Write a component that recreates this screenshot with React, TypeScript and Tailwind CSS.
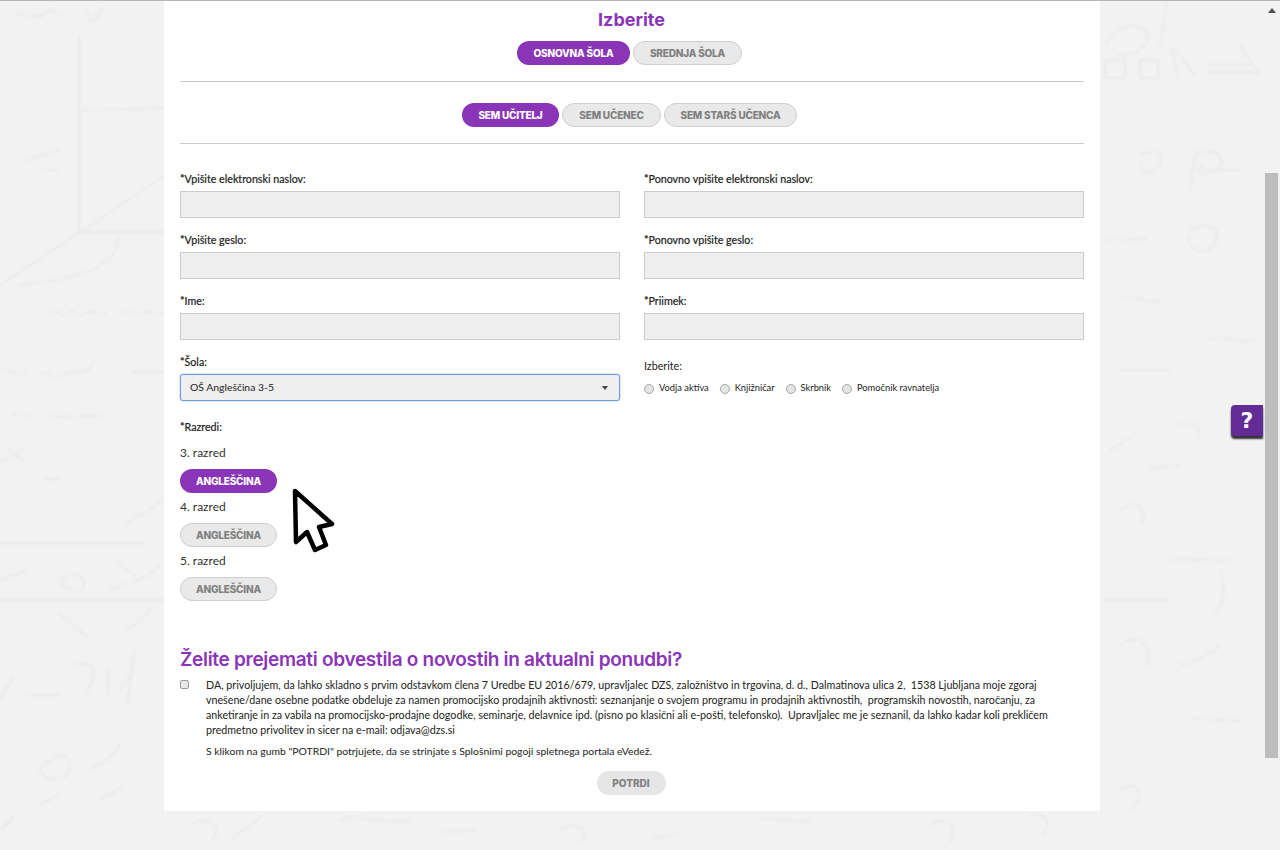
import React from "react";

const sans = "font-['Lato','Open_Sans',sans-serif]";
const display = "font-['Inter','Lato',sans-serif]";

function Pill({ label, active, w }: { label: string; active?: boolean; w: string }) {
  return (
    <button
      className={`${w} h-6 rounded-full text-[10px] font-extrabold tracking-[-0.2px] ${display} ${
        active ? "bg-[#8a35b8] text-white" : "bg-[#e9e9e9] border border-[#cfcfcf] text-[#7f7f7f]"
      }`}
    >
      {label}
    </button>
  );
}

function Field({ label }: { label: string }) {
  return (
    <div className="flex flex-col">
      <label className="h-[15px] leading-[14px] text-[10.7px] text-[#222] [-webkit-text-stroke:0.2px] mb-[4px]">{label}</label>
      <input className="h-[27px] bg-[#efefef] border border-[#cccccc] block w-full" />
    </div>
  );
}

function Grade({ n, active }: { n: string; active?: boolean }) {
  return (
    <div className="flex flex-col items-start">
      <div className="h-[16px] leading-[16px] text-[12px] text-[#333] mb-[8px]">{n}. razred</div>
      <Pill label="ANGLEŠČINA" active={active} w="w-[97px]" />
    </div>
  );
}

function Radio({ label }: { label: string }) {
  return (
    <span className="flex items-center">
      <span className="w-[10px] h-[10px] rounded-full bg-[#e4e4e4] border border-[#a9a9a9] mr-[5px] mt-[2px]" />
      <span className="text-[9.3px] text-[#222]">{label}</span>
    </span>
  );
}

export default function App() {
  return (
    <div className={`relative h-[850px] w-[1280px] overflow-hidden bg-[#f2f2f2] ${sans}`}>
      <svg className="absolute inset-0 blur-[1px]" width="1280" height="850" fill="none" stroke="#eaeaea" strokeWidth="2">
        <path d="M15 15c10-6 20 8 30-2s10 8 20 0M85 10l8 12 10-14M79 35V233M80 110l84-2M0 285l79-52 85-57M118 235c2 25-20 42-100 50M80 232h84M25 160l35-10M42 170h16" />
        <path d="M50 313c8-6 10 6 18 0s10 6 18 0 10 6 20 0M125 313c8-6 10 6 18 0s10 6 20 0M0 372c8-8 16 8 26 0M40 375c8-8 14 8 24 0s16 6 30-12M132 372h32M12 416c8-8 14 6 20 0M50 417c12-6 20 6 30 0s14 4 22-2" />
        <path d="M0 462l25-14M8 448l16 14M45 479h16M125 525c15-14 25-10 39-28M0 543h145M0 582c10-8 20-6 26-12M60 582c6-10 20-10 24 0s-16 12-24 0M115 560l20 16M110 590c12-4 30-8 50-24M0 600h164M58 612l30 26M125 630c10-4 22-14 26-24" />
        <path d="M0 700c4-10 10-16 14-24M26 695h34M75 665c20-5 25 5 10 30M108 695v-28M118 690c6-6 10-8 14-20M135 650l-8 55M40 770c12-16 30-20 30-4s-25 18-30 4M90 770c10-6 28-18 30-26M100 800c10-6 18-10 24-14M40 805c10-6 18-8 20-14M0 830c6-4 10-10 14-14" />
        <path d="M1105 45c10-18 30-26 40-14s-8 26-30 24M1166 5l-6 40M1172 48l6 30M1105 60h20v18h-20zM1140 60h18v18h-18zM1175 48l20 28M1208 65h46M1208 72h50M1240 45l20 30M1140 155c20-8 25 2 18 12s-25 6-14-6M1198 155c18-10 30 5 20 14s-25 6-16-4M1190 190l6-40M1205 170h35" />
        <path d="M1106 240c14-6 26 4 40-2M1190 230c20-10 34 0 24 14s-30 6-24-10M1120 300c14-8 26 6 40 0M1210 340c14-6 28 4 44 0M1180 425c14-8 24 4 16 14M1120 370h50M1110 450l24-14M1150 470c12-6 20 0 30-6" />
        <path d="M1120 510c14-12 26-2 22 14M1170 560c18-5 40 5 60 0M1220 570c5 20 5 30-5 45M1120 645c18-14 36 2 26 22M1190 720c14-6 30 4 50 0M1120 790c16-12 26 4 12 20M1106 600h64M1180 665c14-4 30-10 40-20" />
        <path d="M190 825c16-12 34 2 22 16M232 838c10-8 20-12 30-22M340 820c14-6 40 4 70 0M560 830c14-12 34 2 18 14M760 820c14-4 30 4 50 0M930 825c18-12 30 4 18 18M1030 815c14-4 24 8 12 20M440 835c14-8 24-2 36-6M650 840c10-6 20-2 30-8" />
      </svg>

      <div className="relative ml-[164px] w-[936px] h-[811px] bg-white px-4 text-[#222]">
        <h2 className={`h-[41px] pt-[9px] pr-[1px] leading-[22px] text-center text-[18px] font-bold text-[#8a35b8] ${display}`}>Izberite</h2>
        <div className="flex justify-center gap-[3px] pr-[5px]">
          <Pill label="OSNOVNA ŠOLA" active w="w-[113px]" />
          <Pill label="SREDNJA ŠOLA" w="w-[109px]" />
        </div>
        <hr className="mt-4 border-0 border-t border-[#cccccc]" />
        <div className="flex justify-center gap-[3px] pr-[5px] mt-[21px]">
          <Pill label="SEM UČITELJ" active w="w-[97px]" />
          <Pill label="SEM UČENEC" w="w-[99px]" />
          <Pill label="SEM STARŠ UČENCA" w="w-[133px]" />
        </div>
        <hr className="mt-4 border-0 border-t border-[#cccccc]" />

        <div className="grid grid-cols-2 gap-x-6 gap-y-[15px] mt-[28px]">
          <Field label="*Vpišite elektronski naslov:" />
          <Field label="*Ponovno vpišite elektronski naslov:" />
          <Field label="*Vpišite geslo:" />
          <Field label="*Ponovno vpišite geslo:" />
          <Field label="*Ime:" />
          <Field label="*Priimek:" />
          <div className="flex flex-col">
            <label className="h-[15px] leading-[14px] text-[10.7px] [-webkit-text-stroke:0.2px] mb-[4px]">*Šola:</label>
            <div className="h-[27px] bg-[#efefef] border border-[#6f9be0] rounded-[3px] shadow-[0_0_2px_#8fb4ea] flex items-center justify-between pl-[9px] pr-[11px]">
              <span className="text-[10.4px]">OŠ Angleščina 3-5</span>
              <span className="w-0 h-0 border-x-[3.5px] border-x-transparent border-t-[4px] border-t-[#444]" />
            </div>
          </div>
          <div className="flex flex-col pt-[3px]">
            <div className="h-[15px] leading-[15px] text-[10.7px]">Izberite:</div>
            <div className="flex items-center gap-[11px] mt-[7px] h-[15px]">
              <Radio label="Vodja aktiva" />
              <Radio label="Knjižničar" />
              <Radio label="Skrbnik" />
              <Radio label="Pomočnik ravnatelja" />
            </div>
          </div>
        </div>

        <div className="h-[15px] leading-[14px] text-[10.7px] [-webkit-text-stroke:0.2px] mt-[19px]">*Razredi:</div>
        <div className="flex flex-col gap-[6px] mt-[10px]">
          <Grade n="3" active />
          <Grade n="4" />
          <Grade n="5" />
        </div>

        <h3 className={`mt-[46px] h-[26px] leading-[26px] text-[19px] font-semibold tracking-[-0.3px] text-[#8a35b8] ${display}`}>
          Želite prejemati obvestila o novostih in aktualni ponudbi?
        </h3>
        <div className="flex mt-[4px]">
          <input type="checkbox" className="appearance-none w-[9px] h-[9px] mt-[3px] mr-[17px] shrink-0 bg-[#e8e8e8] border border-[#999] rounded-[2px]" />
          <div className="text-[10.7px] leading-[15px] text-[#222]">
            <p className="mb-[7px]">
              DA, privoljujem, da lahko skladno s prvim odstavkom člena 7 Uredbe EU 2016/679, upravljalec DZS, založništvo in trgovina, d. d., Dalmatinova ulica 2,&nbsp; 1538 Ljubljana moje zgoraj vnešene/dane osebne podatke obdeluje za namen promocijsko prodajnih aktivnosti: seznanjanje o svojem programu in prodajnih aktivnostih,&nbsp; programskih novostih, naročanju, za anketiranje in za vabila na promocijsko-prodajne dogodke, seminarje, delavnice ipd. (pisno po klasični ali e-pošti, telefonsko).&nbsp; Upravljalec me je seznanil, da lahko kadar koli prekličem predmetno privolitev in sicer na e-mail: odjava@dzs.si
            </p>
            <p className="text-[10.4px]">S klikom na gumb "POTRDI" potrjujete, da se strinjate s Splošnimi pogoji spletnega portala eVedež.</p>
          </div>
        </div>
        <div className="flex justify-center pr-[2px] mt-[12px]">
          <button className={`w-[69px] h-6 rounded-full bg-[#e6e6e6] text-[10px] font-extrabold text-[#7f7f7f] ${display}`}>POTRDI</button>
        </div>
      </div>

      <svg className="absolute left-[291px] top-[487px]" width="46" height="68" viewBox="0 0 46 68" fill="#fff" stroke="#000" strokeWidth="4.5" strokeLinejoin="round">
        <path d="M4 4 L41 37 L28 40 L35 58 L24 63 L16 45 L5 55 Z" />
      </svg>

      <div className="absolute left-[1231px] top-[405px] w-[32px] h-[31px] rounded-l-[4px] bg-[#632b96] shadow-[0_3px_2px_#333] flex items-center justify-center text-white text-[22px] font-extrabold font-['DejaVu_Sans',sans-serif]">?</div>

      <div className="absolute left-0 top-0 w-full h-px bg-[#b5b5b5]" />
      <div className="absolute left-[1268px] top-[8px] w-0 h-0 border-x-[4px] border-x-transparent border-b-[5px] border-b-[#505050]" />
      <div className="absolute left-[1265px] top-[173px] w-[13px] h-[585px] bg-[#bdbdbd]" />
    </div>
  );
}
